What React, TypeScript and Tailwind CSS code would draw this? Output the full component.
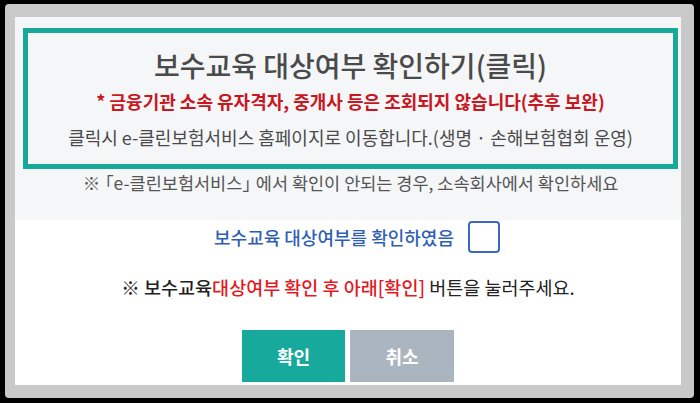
import { useState } from "react";
import { Check } from "lucide-react";

const App = () => {
  const [checked, setChecked] = useState(false);

  return (
    <div className="w-[700px] h-[403px] bg-black pt-[4px] pl-[5px] pr-[6px] pb-[5px] font-['Noto_Sans_CJK_KR','Noto_Sans',sans-serif]">
      <div className="h-full rounded-[4px] bg-[#c9c9c9] pt-[13px] pl-[10px] pr-[13px] pb-[13px]">
        <div className="h-full bg-white flex flex-col">
          {/* 상단 안내 영역 */}
          <div className="h-[203px] bg-[#f4f6f8] pt-[11px] pl-[8px] pr-[3px]">
            <button className="w-full h-[141px] border-[5px] border-[#17a89a] flex flex-col items-center">
              <p className="mt-[14px] h-[36px] leading-[36px] text-[28px] font-medium text-[#4a4a4a]">
                보수교육 대상여부 확인하기(클릭)
              </p>
              <p className="mt-[5px] h-[26px] leading-[26px] text-[18px] font-bold text-[#c8171e]">
                * 금융기관 소속 유자격자, 중개사 등은 조회되지 않습니다(추후 보완)
              </p>
              <p className="mt-[10px] h-[26px] leading-[26px] text-[18px] text-[#4a4a4a]">
                클릭시 e-클린보험서비스 홈페이지로 이동합니다.(생명 · 손해보험협회 운영)
              </p>
            </button>
            <p className="mt-[1px] h-[26px] leading-[26px] text-center text-[17.5px] text-[#555]">
              <span className="tracking-[-4px]">※</span>「e-클린보험서비스<span className="tracking-[-4px]">」</span>에서 확인이 안되는 경우, 소속회사에서 확인하세요
            </p>
          </div>

          {/* 확인 체크 */}
          <label className="mt-[1px] h-[32px] flex items-center justify-center gap-[14px] pl-[18px] cursor-pointer">
            <span className="text-[18px] font-medium text-[#2f5fb5]">보수교육 대상여부를 확인하였음</span>
            <span
              onClick={() => setChecked(!checked)}
              className="w-[32px] h-[32px] rounded-[4px] border-2 border-[#3a68c0] bg-white flex items-center justify-center"
            >
              {checked && <Check size={20} className="text-[#3a68c0]" />}
            </span>
          </label>

          <p className="mt-[21px] h-[26px] leading-[26px] text-center text-[18.5px] font-medium text-[#222]">
            ※ 보수교육<span className="text-[#e3191f]">대상여부 확인 후 아래[확인]</span>{" "}
            <span className="font-normal">버튼을 눌러주세요.</span>
          </p>

          <div className="mt-[30px] flex justify-center gap-[5px]">
            <button className="w-[103px] h-[52px] bg-[#17a99b] text-white text-[18px] font-bold">확인</button>
            <button className="w-[104px] h-[52px] bg-[#abb5bf] text-white text-[18px] font-bold">취소</button>
          </div>
        </div>
      </div>
    </div>
  );
};

export default App;
